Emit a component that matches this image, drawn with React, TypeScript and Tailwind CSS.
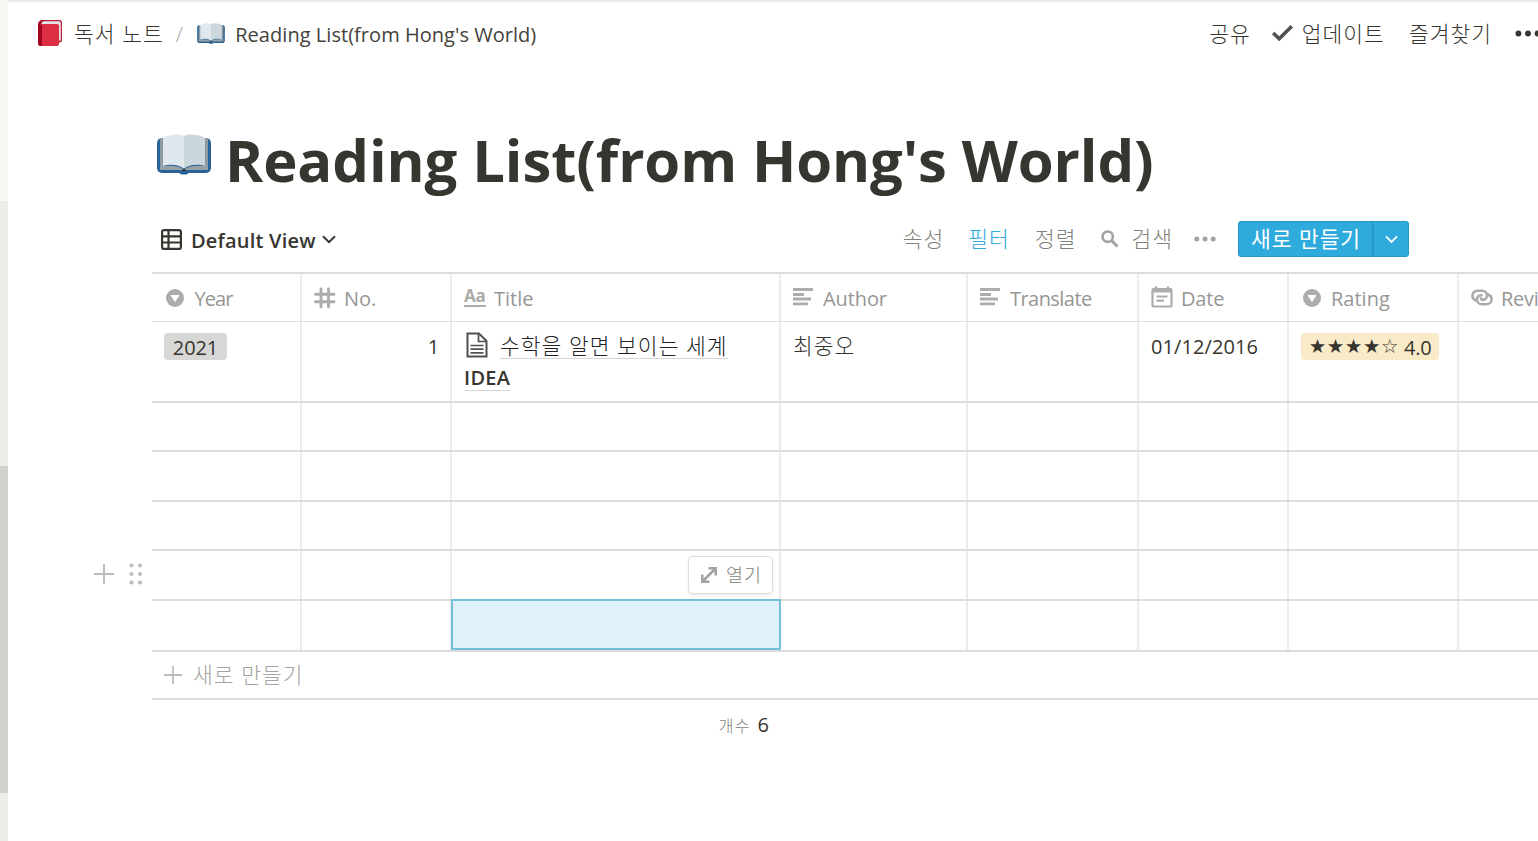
import type { ReactNode } from "react";

const OpenBook = ({ className }: { className: string }) => (
  <svg viewBox="0 0 54 41" className={className}>
    <rect x="0" y="4" width="54" height="35" rx="5" fill="#2a6496" />
    <path d="M21 38h12l-3 2.5h-6z" fill="#2a6496" />
    <path d="M3 4h4v29l-4 2zM51 4h-4v29l4 2z" fill="#8e9ba3" />
    <path d="M3 33C10 31 22 31 27 36C32 31 44 31 51 33V36H3z" fill="#94a1a9" />
    <path d="M27 2C21-1 11 1 6 4V32C12 30 22 30 27 35z" fill="#e1e8ed" />
    <path d="M27 2C33-1 43 1 48 4V32C42 30 32 30 27 35z" fill="#ccd6dd" />
    <path d="M27 34l2.2 3h-4.4z" fill="#292f33" />
  </svg>
);

const RedBook = () => (
  <svg viewBox="0 0 26 28" className="h-7 w-[26px]">
    <path d="M5 1h17.500a2.500 2.500 0 0 1 2.500 2.500V21a2.500 2.500 0 0 1-2.500 2.500H5z" fill="#b8233a" />
    <path d="M4 2.300h18a1.800 1.800 0 0 1 1.800 1.800V21.500H4z" fill="#e3e3e6" />
    <path d="M1 5.500A4.500 4.500 0 0 1 5.500 1H7v1.300H6A2 2 0 0 0 5 5.500z" fill="#a0041e" />
    <path d="M1 5h19a2 2 0 0 1 2 2v18a2 2 0 0 1-2 2H4a3 3 0 0 1-3-3z" fill="#dd2e44" />
    <path d="M1 4.500l4 1.500v21H4a3 3 0 0 1-3-3z" fill="#a0041e" />
  </svg>
);

const SelectIcon = () => (
  <svg viewBox="0 0 18 18" className="h-[18px] w-[18px]">
    <circle cx="9" cy="9" r="9" fill="#acacaa" />
    <path d="M4.300 6h9.400L9 13z" fill="#fff" />
  </svg>
);

const HashIcon = () => (
  <svg viewBox="0 0 22 22" className="h-[22px] w-[22px]" stroke="#acacaa" strokeWidth="2.900" strokeLinecap="round">
    <path d="M7 2v18M14.500 2v18M1.500 7.200h18.500M1.500 14.700h18.500" />
  </svg>
);

const TitleIcon = () => (
  <span className="block h-[19px] w-[22px] border-b-2 border-[#acacaa] text-[17px] font-bold leading-[15px] tracking-[-0.2px] text-[#acacaa]">
    Aa
  </span>
);

const TextIcon = () => (
  <svg viewBox="0 0 20 18" className="mb-px h-[18px] w-5" stroke="#acacaa" strokeWidth="2.800">
    <path d="M0 1.500h20M0 6.500h11M0 11h18M0 15.800h15" />
  </svg>
);

const DateIcon = () => (
  <svg viewBox="0 0 22 22" className="mb-px h-[22px] w-[22px]" fill="none" stroke="#acacaa" strokeWidth="2.200">
    <rect x="1.500" y="3" width="19" height="17.500" rx="1.500" />
    <path d="M1 4.500h20" strokeWidth="4" />
    <path d="M5 0.500v3M17 0.500v3" strokeWidth="2.500" />
    <path d="M5.500 10.500h11M5.500 14.700h7.500" />
  </svg>
);

const RelationIcon = () => (
  <svg viewBox="0 0 22 17" className="h-[17px] w-[22px]" fill="none" stroke="#acacaa" strokeWidth="2.600" strokeLinecap="round">
    <path d="M5 11.500C2.500 10.500 1.400 8.800 1.400 6.800C1.400 3.800 3.700 1.700 6.700 1.700H11C14 1.700 16 3.800 16 6.500C16 9.200 13.800 10.900 11.500 10.900C10.300 10.900 9.800 10 10.200 9.300" />
    <path d="M17 5.500C19.500 6.500 20.600 8.200 20.600 10.200C20.600 13.200 18.300 15.300 15.300 15.300H11C8 15.300 6 13.200 6 10.500C6 7.800 8.200 6.100 10.500 6.100" />
  </svg>
);

const PageIcon = () => (
  <svg viewBox="0 0 22 26" className="ml-0.5 h-[26px] w-[22px]" fill="none" stroke="#50504c" strokeWidth="2">
    <path d="M1.500 1.500H13L20.500 9V24.500H1.500z" />
    <path d="M12.500 1.500V9.500H20.500M4.500 13.500h13M4.500 17.200h13M4.500 20.900h13" strokeWidth="1.700" />
  </svg>
);

const PlusIcon = ({ className }: { className: string }) => (
  <svg viewBox="0 0 20 20" className={className} stroke="#bdbdbb" strokeWidth="2">
    <path d="M10 0v20M0 10h20" />
  </svg>
);

const Chevron = ({ className }: { className: string }) => (
  <svg viewBox="0 0 14 9" className={className} fill="none" stroke="currentColor" strokeWidth="2">
    <path d="M1 1.200l6 6 6-6" />
  </svg>
);

const Dots = ({ className }: { className: string }) => (
  <svg viewBox="0 0 22 6" className={className} fill="currentColor">
    <circle cx="2.800" cy="3" r="2.500" />
    <circle cx="11" cy="3" r="2.500" />
    <circle cx="19.200" cy="3" r="2.500" />
  </svg>
);

type Column = { name: string; icon: ReactNode; width: string; gap: string; text: string };

const columns: Column[] = [
  { name: "Year", icon: <SelectIcon />, width: "w-[150px] pl-[13.5px]", gap: "gap-[11px]", text: "tracking-[-0.9px]" },
  { name: "No.", icon: <HashIcon />, width: "w-[150px] pl-3", gap: "gap-2", text: "tracking-[0px]" },
  { name: "Title", icon: <TitleIcon />, width: "w-[329px] pl-3", gap: "gap-2", text: "tracking-[0px]" },
  { name: "Author", icon: <TextIcon />, width: "w-[187px] pl-3", gap: "gap-2.5", text: "tracking-[-0.1px]" },
  { name: "Translate", icon: <TextIcon />, width: "w-[171px] pl-3", gap: "gap-2.5", text: "tracking-[-0.55px]" },
  { name: "Date", icon: <DateIcon />, width: "w-[150px] pl-3", gap: "gap-2", text: "tracking-[-0.2px]" },
  { name: "Rating", icon: <SelectIcon />, width: "w-[170px] pl-3.5", gap: "gap-2.5", text: "tracking-[0px]" },
  { name: "Reviews", icon: <RelationIcon />, width: "w-[200px] pl-3", gap: "gap-2", text: "tracking-[-0.3px]" },
];

const emptyRows = ["h-[49px]", "h-[50px]", "h-[49px]", "h-[50px]", "h-[51px]"];

const cell = "relative shrink-0 border-r-2 border-[#ececeb]";
const korean = "text-[21.5px] font-light tracking-[1px]";

const Sidebar = () => (
  <aside className="flex w-2 shrink-0 flex-col bg-[#edece9]">
    <div className="h-[201px] bg-[#f7f6f3]" />
    <div className="mt-[265px] h-[327px] bg-[#d3d1cd]" />
  </aside>
);

const TopBar = () => (
  <header className="flex h-16 items-center border-t-2 border-[#ebebeb] pl-[29px]">
    <RedBook />
    <span className={`ml-[11px] pt-0.5 leading-8 ${korean}`}>독서 노트</span>
    <span className="ml-[12px] w-[9px] pt-[3px] text-[21px] font-light text-[#a9a9a7]">/</span>
    <OpenBook className="ml-[12.5px] h-[21px] w-7" />
    <span className="ml-[10px] pt-[3px] text-[20px] leading-8 tracking-[0.04px] text-[#43423d]">Reading List(from Hong's World)</span>
    <nav className={`ml-auto flex shrink-0 items-center leading-8 ${korean}`}>
      <span className="pt-px">공유</span>
      <svg viewBox="0 0 21 16" className="ml-[21px] mr-[9px] h-4 w-[21px]" fill="none" stroke="#50504c" strokeWidth="3.500">
        <path d="M1.200 8l6 5.800L19.800 1.200" />
      </svg>
      <span className="pt-px">업데이트</span>
      <span className="ml-[24px] pt-px">즐겨찾기</span>
      <Dots className="-mr-1 ml-[22px] h-[7px] w-[28px]" />
    </nav>
  </header>
);

const Toolbar = () => (
  <div className="flex h-9 items-center pl-[153px]">
    <svg viewBox="0 0 21 21" className="h-[21px] w-[21px]" fill="none" stroke="currentColor" strokeWidth="2.200">
      <rect x="1.100" y="1.100" width="18.800" height="18.800" rx="2" />
      <path d="M1 7.300h19M1 13.500h19M7.500 1v19" />
    </svg>
    <span className="ml-[9px] pt-[3px] text-[20px] tracking-[0.2px] [font-weight:550]">Default View</span>
    <Chevron className="ml-1.5 h-[9px] w-[14px]" />
    <div className={`ml-auto flex items-center pr-[129px] text-[#7f7f7c] ${korean}`}>
      <span>속성</span>
      <span className="ml-[24px] text-[#2eaadc]">필터</span>
      <span className="ml-[25px]">정렬</span>
      <svg viewBox="0 0 18 18" className="ml-[25px] h-[18px] w-[18px]" fill="none" stroke="#a3a3a1">
        <circle cx="6.700" cy="6.700" r="5.200" strokeWidth="2.600" />
        <path d="M10.500 10.500l6 6" strokeWidth="3" />
      </svg>
      <span className="ml-[12px]">검색</span>
      <Dots className="ml-[21px] mr-[22px] h-[6px] w-[22px] text-[#a3a3a1]" />
      <button className="flex h-9 w-[171px] items-center overflow-hidden rounded-[4px] bg-[#2eaadc] text-white shadow-[inset_0_0_0_1px_#2799c8]">
        <span className="flex h-full w-[136px] items-center justify-center whitespace-nowrap border-r-2 border-[#2799c8] pl-0.5 tracking-[0.95px] [font-weight:400]">
          새로 만들기
        </span>
        <span className="flex flex-1 justify-center">
          <Chevron className="h-[9px] w-[13px]" />
        </span>
      </button>
    </div>
  </div>
);

const Table = () => (
  <div className="ml-[144px] mt-[15px]">
    <div className="flex h-[50px] border-b border-t-2 border-b-[#dededd] border-t-[#dcdcdb]">
      {columns.map((col) => (
        <div key={col.name} className={`flex shrink-0 items-center border-r-2 border-[#ececeb] ${col.width} ${col.gap}`}>
          {col.icon}
          <span className={`pt-0.5 text-[20px] leading-6 text-[#969694] ${col.text}`}>{col.name}</span>
        </div>
      ))}
    </div>

    <div className="flex h-[81px] border-b-2 border-[#dcdcdb] text-[20px] tracking-[-0.3px]">
      <div className={`${cell} w-[150px] pl-3 pt-[11px]`}>
        <span className="flex h-[27px] w-[63px] items-center justify-center rounded-[4px] bg-[#d7d7d5] pt-0.5 tracking-[-0.1px]">2021</span>
      </div>
      <div className={`${cell} w-[150px] pr-[11px] pt-[9px] text-right leading-8`}>1</div>
      <div className={`${cell} w-[329px] pl-3 pt-2`}>
        <div className="flex items-center">
          <PageIcon />
          <span className={`ml-3 whitespace-nowrap border-b border-[#d5d5d3] pt-[3px] leading-[25px] text-[#222] ${korean}`}>
            수학을 알면 보이는 세계
          </span>
        </div>
        <span className="mt-[2px] inline-block border-b border-[#d5d5d3] pt-[4px] leading-[25px] tracking-[0.3px] [font-weight:550]">IDEA</span>
      </div>
      <div className={`${cell} w-[187px] pl-3 pt-2 leading-8 ${korean}`}>최중오</div>
      <div className={`${cell} w-[171px]`} />
      <div className={`${cell} w-[150px] pl-3 pt-[9px] leading-8 tracking-[0.1px]`}>01/12/2016</div>
      <div className={`${cell} w-[170px] pl-3 pt-[11px]`}>
        <span className="flex h-[27px] w-[138px] items-center justify-center rounded-[4px] bg-[#faebc8]">
          <span className="pt-px font-['DejaVu_Sans'] text-[19.5px] tracking-[0.6px]">★★★★☆</span>
          <span className="ml-[5px] pt-0.5">4.0</span>
        </span>
      </div>
      <div className="w-[200px] shrink-0" />
    </div>

    {emptyRows.map((height, row) => (
      <div key={row} className={`relative flex border-b-2 border-[#dcdcdb] ${height}`}>
        {row === 3 && (
          <div className="absolute -left-[58px] top-[12px] flex items-center">
            <PlusIcon className="h-5 w-5" />
            <svg viewBox="0 0 14 22" className="ml-[15px] h-[22px] w-[14px]" fill="#bdbdbb">
              {[2.5, 11, 19.5].map((y) => (
                <g key={y}>
                  <circle cx="2.500" cy={y} r="2.100" />
                  <circle cx="11" cy={y} r="2.100" />
                </g>
              ))}
            </svg>
          </div>
        )}
        {columns.map((col, i) => (
          <div key={col.name} className={`${cell} ${col.width}`}>
            {row === 3 && i === 2 && (
              <div className="absolute right-[7px] top-[6px] flex h-[36px] w-[83px] items-center rounded-[4px] bg-white pl-3 text-[#7f7f7c] shadow-[0_0_0_1px_#dddddb,0_2px_4px_#00000020]">
                <svg viewBox="0 0 16 16" className="h-4 w-4" fill="none" stroke="#a3a3a1" strokeWidth="2.600">
                  <path d="M2 14L14 2M7.500 1.200h7.300v7.300M1.200 7.500v7.300h7.300" />
                </svg>
                <span className="ml-[9px] whitespace-nowrap pb-px text-[18.5px] font-light tracking-[0.9px]">열기</span>
              </div>
            )}
            {row === 4 && i === 2 && (
              <div className="absolute -left-px -right-[2px] -top-[2px] bottom-0 border-2 border-[#75bfdc] bg-[#dff2fa]" />
            )}
          </div>
        ))}
      </div>
    ))}

    <div className={`flex h-12 items-center border-b-2 border-[#dcdcdb] pl-3 text-[#a3a3a1] ${korean}`}>
      <PlusIcon className="h-[18px] w-[18px]" />
      <span className="ml-[11px] pt-px">새로 만들기</span>
    </div>
    <div className="flex w-[617px] items-baseline justify-end pt-[9px] leading-8">
      <span className="text-[16px] font-light tracking-[1.2px] text-[#7f7f7c]">개수</span>
      <span className="ml-[7px] text-[20px]">6</span>
    </div>
  </div>
);

const App = () => {
  return (
    <div className="flex h-[841px] w-full overflow-hidden bg-white font-['Open_Sans','Noto_Sans_CJK_KR',sans-serif] text-[#37352f]">
      <Sidebar />
      <main className="min-w-0 flex-1 overflow-hidden">
        <TopBar />
        <div className="flex h-[157px] items-start pl-[149px] pt-[70px]">
          <OpenBook className="h-[41px] w-[54px]" />
          <h1 className="-mt-[14px] ml-3.5 whitespace-nowrap text-[58px] font-bold leading-[80px] tracking-[-0.1px]">
            Reading List(from Hong's World)
          </h1>
        </div>
        <Toolbar />
        <Table />
      </main>
    </div>
  );
};

export default App;
